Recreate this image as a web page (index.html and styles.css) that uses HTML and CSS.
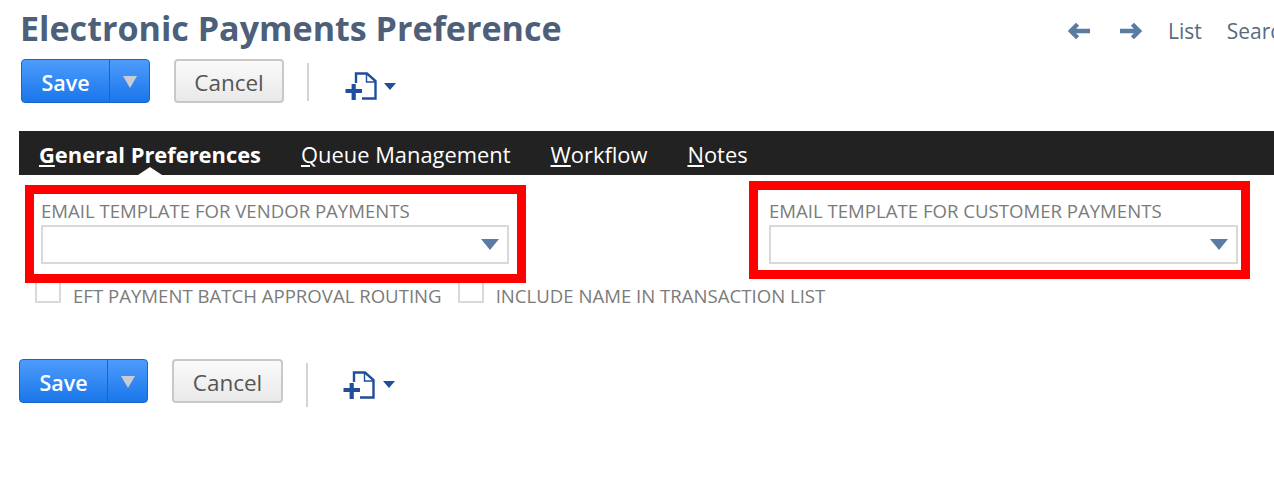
FILE: index.html
```html
<!DOCTYPE html>
<html lang="en">
<head>
  <meta charset="UTF-8">
  <title>Electronic Payments Preference</title>
  <link rel="stylesheet" href="styles.css">
</head>
<body>
  <svg class="defs" width="0" height="0">
    <symbol id="new-doc" viewBox="0 0 32 28">
      <path d="M11 11V1.5h11L30.5 9v17.5H17" fill="none" stroke="#1f4e9a" stroke-width="2.4"/>
      <path d="M21.5 2v8h9" fill="none" stroke="#1f4e9a" stroke-width="1.4"/>
      <path d="M.5 19h16.5M8.7 12v16" fill="none" stroke="#1f4e9a" stroke-width="4.2"/>
    </symbol>
  </svg>

  <header class="page-head">
    <h1>Electronic Payments Preference</h1>
    <nav class="page-nav">
      <svg class="arrow" viewBox="0 0 24 18"><path d="M10 2L3 9l7 7M3 9h20" fill="none" stroke="#5a7ca3" stroke-width="4.6"/></svg>
      <svg class="arrow" viewBox="0 0 24 18"><path d="M14 2l7 7-7 7M21 9H1" fill="none" stroke="#5a7ca3" stroke-width="4.6"/></svg>
      <a class="nav-list">List</a>
      <a class="nav-search">Search</a>
    </nav>
  </header>

  <div class="toolbar">
    <div class="save-btn"><span class="save-label">Save</span><span class="save-more"><i></i></span></div>
    <div class="cancel-btn">Cancel</div>
    <div class="sep"></div>
    <svg class="doc-icon"><use href="#new-doc"/></svg>
    <i class="doc-caret"></i>
  </div>

  <div class="tabs">
    <a class="tab active"><u>G</u>eneral Preferences</a>
    <a class="tab"><u>Q</u>ueue Management</a>
    <a class="tab"><u>W</u>orkflow</a>
    <a class="tab"><u>N</u>otes</a>
  </div>

  <div class="fields">
    <div class="field-box vendor">
      <label>EMAIL TEMPLATE FOR VENDOR PAYMENTS</label>
      <div class="select"><i></i></div>
    </div>
    <div class="field-box customer">
      <label>EMAIL TEMPLATE FOR CUSTOMER PAYMENTS</label>
      <div class="select"><i></i></div>
    </div>
  </div>

  <div class="checks">
    <div class="check"><span class="box"></span>EFT PAYMENT BATCH APPROVAL ROUTING</div>
    <div class="check"><span class="box"></span>INCLUDE NAME IN TRANSACTION LIST</div>
  </div>

  <div class="toolbar bottom">
    <div class="save-btn"><span class="save-label">Save</span><span class="save-more"><i></i></span></div>
    <div class="cancel-btn">Cancel</div>
    <div class="sep"></div>
    <svg class="doc-icon"><use href="#new-doc"/></svg>
    <i class="doc-caret"></i>
  </div>
</body>
</html>
```

FILE: styles.css
```css
html, body {
  height: 481px;
  overflow: hidden;
}
body {
  margin: 0;
  padding: 0;
  background: #fff;
  font-family: "Open Sans", sans-serif;
  color: #555;
}
.defs {
  display: block;
  height: 0;
}
.page-head {
  display: flex;
  justify-content: space-between;
  height: 58px;
  padding-left: 20px;
}
h1 {
  margin: 0;
  font-size: 34.1px;
  font-weight: 700;
  color: #4d5f79;
  line-height: 56px;
  white-space: nowrap;
}
.page-nav {
  display: flex;
  align-items: center;
  width: 206px;
  overflow: hidden;
  font-size: 21px;
  color: #5a6a7e;
  flex-shrink: 0;
  white-space: nowrap;
  padding-top: 4px;
}
.arrow {
  width: 23px;
  height: 18px;
  margin-right: 28px;
  flex-shrink: 0;
}
.arrow + .arrow {
  margin-right: 26px;
}
.nav-list {
  margin-right: 25px;
}
.toolbar {
  display: flex;
  align-items: center;
  height: 44px;
  margin-top: 1px;
  padding-left: 21px;
}
.toolbar.bottom {
  margin-top: 50px;
  padding-left: 19px;
}
.save-btn {
  display: flex;
  width: 129px;
  height: 44px;
  box-sizing: border-box;
  border: 1px solid #1467c9;
  border-radius: 4px;
  background: linear-gradient(#4d9cfb, #1a76ea);
  color: #fff;
  font-size: 21.5px;
  font-weight: 600;
}
.save-label {
  width: 87px;
  line-height: 45px;
  text-align: center;
  border-right: 1px solid #1467c9;
}
.save-more {
  flex: 1;
  display: flex;
  justify-content: center;
  align-items: center;
  padding-top: 2px;
}
.save-more i {
  border-left: 7px solid transparent;
  border-right: 7px solid transparent;
  border-top: 12px solid #c9ccd1;
}
.cancel-btn {
  width: 110px;
  height: 44px;
  box-sizing: border-box;
  margin-left: 24px;
  border: 2px solid #c8c8c8;
  border-radius: 4px;
  background: linear-gradient(#fafafa, #e9e9e9);
  color: #555;
  font-size: 22.5px;
  line-height: 43px;
  text-align: center;
}
.bottom .cancel-btn {
  width: 111px;
}
.sep {
  width: 2px;
  height: 38px;
  margin-top: 2px;
  margin-left: 23px;
  background: #d4d4d4;
}
.bottom .sep {
  height: 44px;
  margin-top: 8px;
}
.doc-icon {
  width: 32px;
  height: 28px;
  margin-top: 10px;
  margin-left: 36px;
}
.bottom .doc-icon {
  margin-top: 7px;
  margin-left: 35px;
}
.doc-caret {
  margin-top: 11px;
  margin-left: 7px;
  border-left: 6px solid transparent;
  border-right: 6px solid transparent;
  border-top: 7px solid #1f4e9a;
}
.bottom .doc-caret {
  margin-top: 7px;
  margin-left: 8px;
}
.tabs {
  display: flex;
  height: 44px;
  margin-top: 28px;
  margin-left: 19px;
  padding-left: 20px;
  gap: 40px;
  background: #222;
  font-size: 21.9px;
  line-height: 47px;
  color: #fff;
}
.tab.active {
  position: relative;
  font-weight: 700;
}
.tab.active::after {
  content: "";
  position: absolute;
  left: 99px;
  bottom: 0;
  border-left: 12px solid transparent;
  border-right: 12px solid transparent;
  border-bottom: 8px solid #fff;
}
.fields {
  display: flex;
  align-items: flex-start;
  position: relative;
  z-index: 1;
  gap: 223px;
  margin-left: 25px;
}
.field-box {
  width: 501px;
  height: 98px;
  box-sizing: border-box;
  border: 9px solid #f00;
}
.field-box.vendor {
  margin-top: 10px;
  padding: 5px 8px 0 7px;
}
.field-box.customer {
  margin-top: 6px;
  padding: 9px 3px 0 11px;
}
.field-box label {
  display: block;
  margin-bottom: 2px;
  font-size: 18.6px;
  line-height: 24px;
  color: #7b7b7b;
  white-space: nowrap;
}
.select {
  position: relative;
  height: 39px;
  box-sizing: border-box;
  border: 2px solid #d9d9d9;
}
.select i {
  position: absolute;
  right: 8px;
  top: 12px;
  border-left: 9px solid transparent;
  border-right: 9px solid transparent;
  border-top: 11px solid #5a7ca3;
}
.checks {
  display: flex;
  padding-left: 35px;
  gap: 16px;
  font-size: 18.6px;
  line-height: 26px;
  color: #7b7b7b;
}
.check {
  display: flex;
  align-items: flex-start;
}
.box {
  width: 26px;
  height: 20px;
  box-sizing: border-box;
  margin-right: 12px;
  border: 2px solid #d9d9d9;
  border-top: 0;
}
```
